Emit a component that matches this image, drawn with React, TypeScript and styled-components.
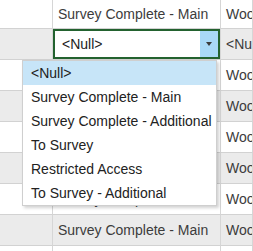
import React from "react";
import styled, { createGlobalStyle } from "styled-components";

const Global = createGlobalStyle`
  html, body { margin: 0; padding: 0; background: #fff; overflow: hidden; }
  body { font-family: "Liberation Sans", Arial, sans-serif; }
`;

const Grid = styled.div`
  position: relative;
  display: grid;
  grid-template-columns: 53px 168px 1fr;
  width: 253px;
  height: 251px;
  overflow: hidden;
`;

const Cell = styled.div<{ $alt?: boolean; $head?: boolean }>`
  box-sizing: border-box;
  height: ${(p) => (p.$head ? 29 : 31)}px;
  border-right: 1px solid #d6d6d6;
  border-bottom: 1px solid #d2d2d2;
  background: ${(p) => (p.$alt ? "#ebebeb" : "#ffffff")};
  color: #3c3c3c;
  font-size: 14px;
  line-height: 1;
  display: flex;
  align-items: center;
  padding-left: 5px;
  white-space: nowrap;
  overflow: hidden;
`;

const EditorCell = styled.div`
  box-sizing: border-box;
  height: 31px;
  border-right: 1px solid #d6d6d6;
  border-bottom: 1px solid #d2d2d2;
  background: #ebebeb;
  display: flex;
`;

const Editor = styled.div`
  box-sizing: border-box;
  flex: 1;
  display: flex;
  align-items: stretch;
  border: 2px solid #23622f;
  background: #fff;
`;

const EditorText = styled.div`
  flex: 1;
  display: flex;
  align-items: center;
  padding-left: 7px;
  font-size: 14px;
  color: #222;
`;

const DropButton = styled.div`
  width: 18px;
  background: #a9d9f7;
  display: flex;
  align-items: center;
  justify-content: center;
`;

const Arrow = styled.div`
  width: 0;
  height: 0;
  border-left: 3px solid transparent;
  border-right: 3px solid transparent;
  border-top: 4px solid #3b3b3b;
`;

const Menu = styled.div`
  position: absolute;
  left: 22px;
  top: 60px;
  width: 195px;
  box-sizing: border-box;
  background: #fff;
  border: 1px solid #cfcfcf;
  box-shadow: 2px 2px 3px rgba(0, 0, 0, 0.18);
`;

const Item = styled.div<{ $active?: boolean }>`
  height: 24px;
  display: flex;
  align-items: center;
  padding-left: 8px;
  font-size: 14px;
  color: #222;
  white-space: nowrap;
  background: ${(p) => (p.$active ? "#c7e5f8" : "transparent")};
`;

const options = [
  "<Null>",
  "Survey Complete - Main",
  "Survey Complete - Additional",
  "To Survey",
  "Restricted Access",
  "To Survey - Additional",
];

const rows = [
  { c2: "", c3: "<Null>" },
  { c2: "Survey Complete - Main", c3: "Woodland" },
  { c2: "Survey Complete - Main", c3: "Woodland" },
  { c2: "Survey Complete - Main", c3: "Woodland" },
  { c2: "Survey Complete - Main", c3: "Woodland" },
  { c2: "Survey Complete - Main", c3: "Woodland" },
  { c2: "Survey Complete - Main", c3: "Woodland" },
  { c2: "Survey Complete - Main", c3: "Woodland" },
];

export default function App() {
  return (
    <>
      <Global />
      <Grid>
        <Cell $head />
        <Cell $head>Survey Complete - Main</Cell>
        <Cell $head>Woodland</Cell>
        {rows.map((r, i) => {
          const alt = i % 2 === 0;
          return (
            <React.Fragment key={i}>
              <Cell $alt={alt} />
              {i === 0 ? (
                <EditorCell>
                  <Editor>
                    <EditorText>&lt;Null&gt;</EditorText>
                    <DropButton>
                      <Arrow />
                    </DropButton>
                  </Editor>
                </EditorCell>
              ) : (
                <Cell $alt={alt}>{r.c2}</Cell>
              )}
              <Cell $alt={alt}>{r.c3}</Cell>
            </React.Fragment>
          );
        })}
        <Menu>
          {options.map((o, i) => (
            <Item key={o} $active={i === 0}>
              {o}
            </Item>
          ))}
        </Menu>
      </Grid>
    </>
  );
}
